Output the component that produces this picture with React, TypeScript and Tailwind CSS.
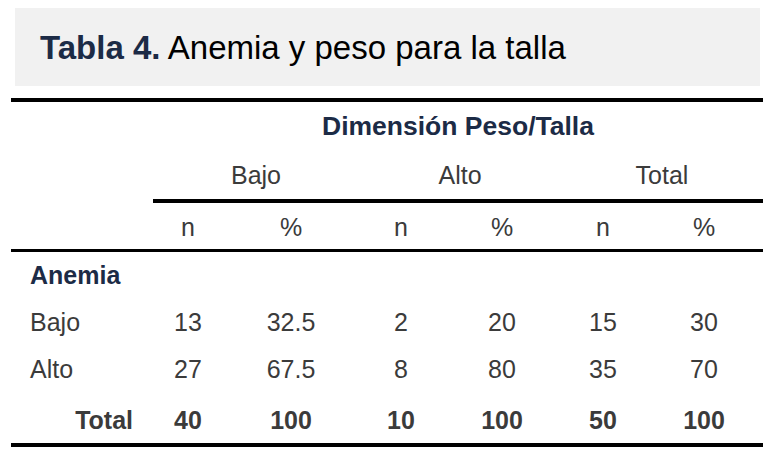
const navy = "text-[#1c2b46]";
const grey = "text-[#3b3b3b]";

type Row = { label: string; values: string[]; bold?: boolean };

const cols = ["w-[70px]", "w-[136px]", "w-[84px]", "w-[118px]", "w-[84px]", "w-[118px]"];
const groups = [
  { name: "Bajo", width: "w-[206px]" },
  { name: "Alto", width: "w-[202px]" },
  { name: "Total", width: "w-[202px]" },
];

const rows: Row[] = [
  { label: "Bajo", values: ["13", "32.5", "2", "20", "15", "30"] },
  { label: "Alto", values: ["27", "67.5", "8", "80", "35", "70"] },
];

function Cells({ values, bold }: { values: string[]; bold?: boolean }) {
  return (
    <>
      {values.map((v, i) => (
        <div key={i} className={`${cols[i]} text-center ${bold ? "font-bold" : ""}`}>
          {v}
        </div>
      ))}
    </>
  );
}

export default function App() {
  return (
    <div
      className="w-[772px] h-[455px] bg-white pt-[8px] overflow-hidden"
      style={{ fontFamily: '"Liberation Sans", Arial, sans-serif' }}
    >
      {/* caption */}
      <div className="ml-[15px] w-[745px] h-[78px] bg-[#f1f1f1] flex items-center pl-[25px]">
        <p className="text-[33px] leading-none text-black">
          <span className={`font-bold ${navy}`}>Tabla 4.</span> Anemia y peso para la talla
        </p>
      </div>

      {/* table */}
      <div className={`mt-[12px] ml-[11px] w-[752px] border-t-4 border-black text-[25px] ${grey}`}>
        <div className="flex h-[50px] items-center">
          <div className="w-[142px]" />
          <div className={`flex-1 text-center text-[26.5px] font-bold ${navy}`}>Dimensión Peso/Talla</div>
        </div>

        <div className="flex">
          <div className="w-[142px]" />
          <div className="flex h-[51px] border-b-4 border-black">
            {groups.map((g) => (
              <div key={g.name} className={`${g.width} flex items-center justify-center`}>
                {g.name}
              </div>
            ))}
          </div>
        </div>

        <div className="flex h-[49px] items-center pt-[3px] border-b-[3px] border-black">
          <div className="w-[142px]" />
          <Cells values={["n", "%", "n", "%", "n", "%"]} />
        </div>

        <div className={`h-[47px] flex items-center pl-[19px] font-bold ${navy}`}>Anemia</div>

        {rows.map((r, i) => (
          <div key={r.label} className={`flex items-center ${i === 0 ? "h-[47px]" : "h-[48px]"}`}>
            <div className="w-[142px] pl-[19px]">{r.label}</div>
            <Cells values={r.values} />
          </div>
        ))}

        <div className="flex items-center h-[53px] pt-[5px] border-b-4 border-black">
          <div className="w-[142px] pr-[20px] text-right font-bold">Total</div>
          <Cells values={["40", "100", "10", "100", "50", "100"]} bold />
        </div>
      </div>
    </div>
  );
}
